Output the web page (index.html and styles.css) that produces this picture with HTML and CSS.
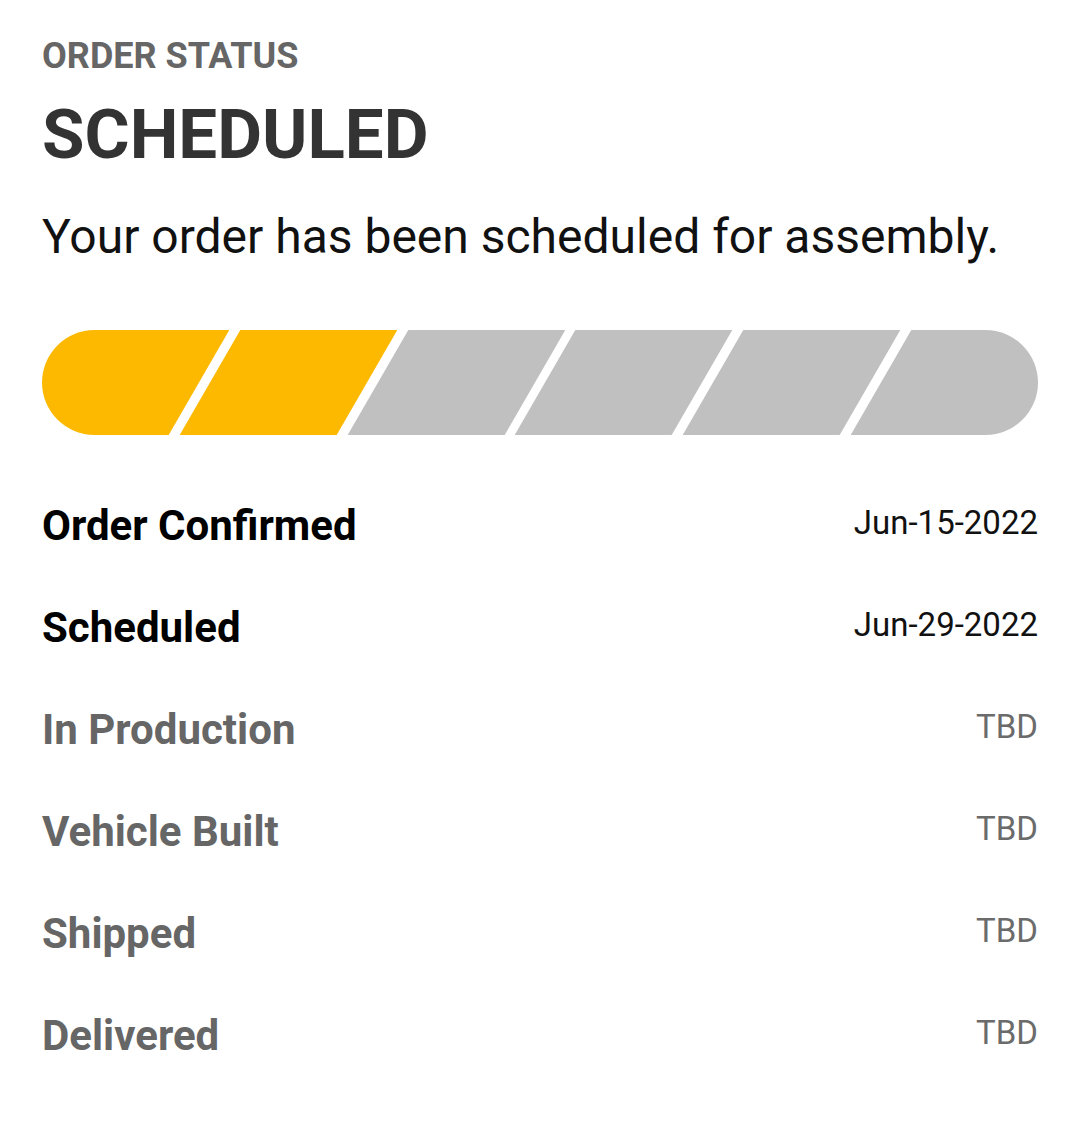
FILE: index.html
```html
<!DOCTYPE html>
<html lang="en">
<head>
  <meta charset="UTF-8" />
  <meta name="viewport" content="width=device-width, initial-scale=1.0"/>
  <title>Order Status</title>
  <link rel="stylesheet" href="styles.css">
</head>
<body>
  <main class="status">
    <div class="eyebrow">ORDER STATUS</div>
    <h1 class="headline">SCHEDULED</h1>
    <p class="summary">Your order has been scheduled for assembly.</p>

    <div class="progress">
      <div class="track">
        <div class="seg done"></div>
        <div class="seg done"></div>
        <div class="seg"></div>
        <div class="seg"></div>
        <div class="seg"></div>
        <div class="seg"></div>
      </div>
    </div>

    <ul class="steps">
      <li class="step done"><span class="name">Order Confirmed</span><span class="date">Jun-15-2022</span></li>
      <li class="step done"><span class="name">Scheduled</span><span class="date">Jun-29-2022</span></li>
      <li class="step"><span class="name">In Production</span><span class="date">TBD</span></li>
      <li class="step"><span class="name">Vehicle Built</span><span class="date">TBD</span></li>
      <li class="step"><span class="name">Shipped</span><span class="date">TBD</span></li>
      <li class="step"><span class="name">Delivered</span><span class="date">TBD</span></li>
    </ul>
  </main>
</body>
</html>
```

FILE: styles.css
```css
    body {
      margin: 0;
      background: #fff;
      font-family: Roboto, "Noto Sans", sans-serif;
    }

    .status {
      padding: 34px 42px 40px 42px;
    }

    .eyebrow {
      font-size: 36px;
      font-weight: 700;
      color: #666;
      line-height: 44px;
    }

    .headline {
      margin: 17px 0 0 0;
      font-size: 69px;
      font-weight: 700;
      color: #333;
      line-height: 80px;
    }

    .summary {
      margin: 34px 0 0 0;
      font-size: 48px;
      color: #111;
      line-height: 56px;
    }

    .progress {
      margin-top: 65px;
      height: 105px;
      border-radius: 53px;
      overflow: hidden;
    }

    .track {
      display: flex;
      gap: 11px;
      height: 100%;
    }

    .seg {
      flex: 1 1 0;
      background: #c0c0c0;
      transform: skewX(-30deg);
    }

    .seg.done {
      background: #fdb900;
    }

    .seg:first-child {
      flex-basis: 40px;
      margin-left: -40px;
    }

    .seg:last-child {
      flex-basis: 40px;
      margin-right: -40px;
    }

    .steps {
      list-style: none;
      margin: 66px 0 0 0;
      padding: 0;
      display: flex;
      flex-direction: column;
      gap: 52px;
    }

    .step {
      display: flex;
      justify-content: space-between;
      align-items: flex-start;
      height: 50px;
      color: #666;
    }

    .step.done {
      color: #000;
    }

    .name {
      font-size: 42px;
      font-weight: 700;
      line-height: 50px;
    }

    .date {
      font-size: 33px;
      line-height: 44px;
      color: #6b6b6b;
    }

    .step.done .date {
      color: #111;
    }
```
